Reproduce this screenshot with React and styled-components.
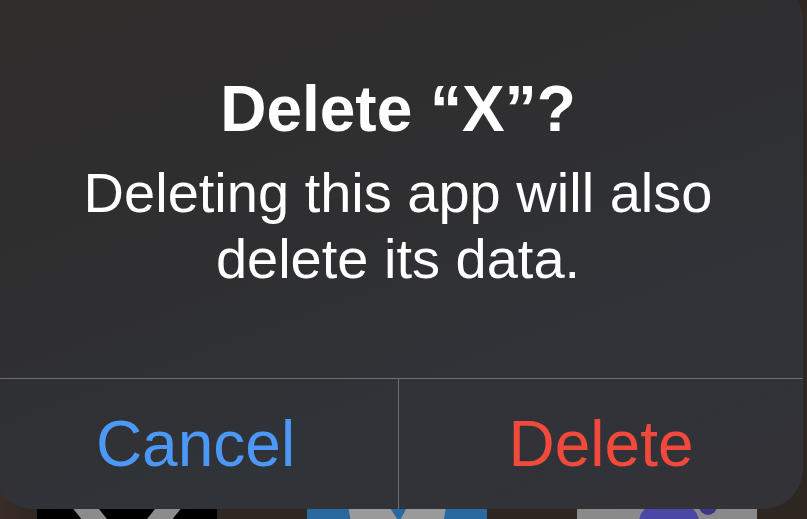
import styled, { createGlobalStyle } from 'styled-components';

const GlobalStyle = createGlobalStyle`
  html, body {
    margin: 0;
    padding: 0;
    background: #2d2621;
    overflow: hidden;
  }
  * {
    box-sizing: border-box;
  }
`;

const Screen = styled.div`
  position: relative;
  width: 807px;
  height: 519px;
  overflow: hidden;
  background: linear-gradient(90deg, #3b2c27 0px, #2e2722 40px, #2d2621 100%);
  font-family: "Liberation Sans", Arial, sans-serif;
`;

const IconRow = styled.div`
  display: flex;
  gap: 90px;
  padding: 470px 0 0 37px;
`;

const AppIcon = styled.div`
  width: 180px;
  height: 180px;
  flex: none;
  border-radius: 40px;
  overflow: hidden;
  background: ${p => p.bg};

  svg {
    display: block;
  }
`;

const Alert = styled.div`
  position: absolute;
  top: -20px;
  left: -7px;
  width: 810px;
  height: 529px;
  border-radius: 40px;
  overflow: hidden;
  display: flex;
  flex-direction: column;
  background: linear-gradient(160deg, #2f2c2b 0%, #2f2f31 45%, #303338 70%, #333237 100%);
  color: #fff;
`;

const Message = styled.div`
  display: flex;
  flex-direction: column;
  align-items: center;
  padding: 91px 40px 86px;
  text-align: center;
`;

const Title = styled.h2`
  margin: 0 0 13px;
  font-size: 64px;
  line-height: 76px;
  font-weight: 700;
  color: #fff;
`;

const Body = styled.p`
  margin: 0;
  max-width: 680px;
  font-size: 56px;
  line-height: 66px;
  font-weight: 400;
  color: #fff;
`;

const Actions = styled.div`
  flex: 1;
  display: grid;
  grid-template-columns: 1fr 1fr;
  border-top: 1px solid #6e6e70;
`;

const ActionButton = styled.button`
  border: 0;
  background: transparent;
  padding: 0;
  height: 130px;
  font-family: inherit;
  font-size: 64px;
  line-height: 130px;
  font-weight: 400;
  color: ${p => (p.destructive ? '#f14a3d' : '#4b98f6')};
  border-left: ${p => (p.divider ? '1px solid #6e6e70' : '0')};
  cursor: pointer;
`;

const App = () => {
  return (
    <Screen>
      <GlobalStyle />
      <IconRow>
        <AppIcon bg="#000">
          <svg width="180" height="180" viewBox="0 0 180 180">
            <path d="M14 -5 L166 185 M166 -5 L14 185" stroke="#8c8c8c" strokeWidth="20" fill="none" />
          </svg>
        </AppIcon>
        <AppIcon bg="#2a68a0">
          <svg width="180" height="180" viewBox="0 0 180 180">
            <path d="M40 30 L78 30 L92 52 L104 30 L140 30 L124 130 L58 130 Z" fill="#9a9a9a" />
          </svg>
        </AppIcon>
        <AppIcon bg="#8a8a8a">
          <svg width="180" height="180" viewBox="0 0 180 180">
            <ellipse cx="92" cy="52" rx="30" ry="22" fill="#4a47a6" />
            <circle cx="131" cy="36" r="9" fill="#3b3889" />
          </svg>
        </AppIcon>
      </IconRow>

      <Alert>
        <Message>
          <Title>Delete “X”?</Title>
          <Body>Deleting this app will also delete its data.</Body>
        </Message>
        <Actions>
          <ActionButton>Cancel</ActionButton>
          <ActionButton divider destructive>Delete</ActionButton>
        </Actions>
      </Alert>
    </Screen>
  );
};

export default App;
